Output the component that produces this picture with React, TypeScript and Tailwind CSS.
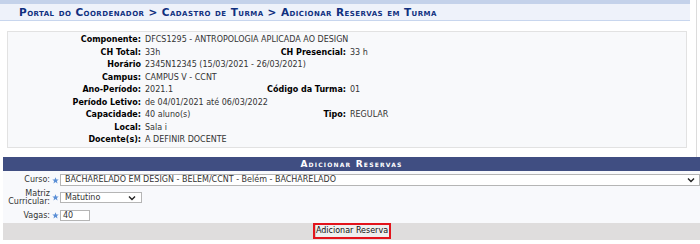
import React from "react";

const Star = () => (
  <svg width="7" height="7" viewBox="0 0 10 10" className="shrink-0">
    <polygon
      points="5,0.5 6.3,3.6 9.6,3.7 7,5.8 7.9,9.2 5,7.3 2.1,9.2 3,5.8 0.4,3.7 3.7,3.6"
      fill="#5b8fd6"
    />
  </svg>
);

const Chevron = () => (
  <svg width="8" height="6" viewBox="0 0 8 6" className="shrink-0">
    <path d="M1 1.5 L4 4.5 L7 1.5" stroke="#222" strokeWidth="1.4" fill="none" />
  </svg>
);

type Row = { l: string; v: string; l2?: string; v2?: string };

const rows: Row[] = [
  { l: "Componente:", v: "DFCS1295 - ANTROPOLOGIA APLICADA AO DESIGN" },
  { l: "CH Total:", v: "33h", l2: "CH Presencial:", v2: "33 h" },
  { l: "Horário", v: "2345N12345 (15/03/2021 - 26/03/2021)" },
  { l: "Campus:", v: "CAMPUS V - CCNT" },
  { l: "Ano-Período:", v: "2021.1", l2: "Código da Turma:", v2: "01" },
  { l: "Período Letivo:", v: "de 04/01/2021 até 06/03/2022" },
  { l: "Capacidade:", v: "40 aluno(s)", l2: "Tipo:", v2: "REGULAR" },
  { l: "Local:", v: "Sala i" },
  { l: "Docente(s):", v: "A DEFINIR DOCENTE" },
];

export default function App() {
  return (
    <div
      className="w-[700px] h-[244px] bg-white overflow-hidden text-[8px] leading-none text-[#333]"
      style={{ fontFamily: '"DejaVu Sans", Verdana, sans-serif' }}
    >
      <div className="w-[697px] border-r border-[#dcdcdc] pb-[9px]">
        <div className="w-[690px] h-[4px] bg-[#c4d2ea]" />
        <div className="w-[690px] h-[17px] bg-[#eef2fa] border-b border-[#c8d6ee] flex items-center pl-[19px]">
          <span
            className="font-bold text-[10.5px] text-[#10307f] tracking-[0.45px] whitespace-nowrap"
            style={{ fontVariant: "small-caps" }}
          >
            Portal do Coordenador &gt; Cadastro de Turma &gt; Adicionar Reservas em Turma
          </span>
        </div>
        <div className="ml-[7px] mt-[10px] w-[680px] h-[117px] border border-[#e2e2e2] bg-[#f8f9fb] pt-[2px]">
          {rows.map((r, i) => (
            <div key={i} className="flex items-center h-[12.5px]">
              <div className="w-[133px] text-right font-bold text-black whitespace-nowrap">{r.l}</div>
              <div className="ml-[4px] w-[105px] whitespace-nowrap">{r.v}</div>
              {r.l2 && (
                <>
                  <div className="w-[96px] text-right font-bold text-black whitespace-nowrap">{r.l2}</div>
                  <div className="ml-[4px] whitespace-nowrap">{r.v2}</div>
                </>
              )}
            </div>
          ))}
        </div>
      </div>

      <div className="ml-[3px] w-[697px]">
        <div className="h-[14px] bg-[#404e82] flex items-center justify-center">
          <span
            className="font-bold text-white text-[9px] tracking-[1.2px]"
            style={{ fontVariant: "small-caps" }}
          >
            Adicionar Reservas
          </span>
        </div>
        <div className="bg-[#f8f9fc] pt-[2px]">
          <div className="flex items-center h-[14px]">
            <div className="w-[47px] text-right">Curso:</div>
            <div className="w-[10px] flex justify-center"><Star /></div>
            <div className="w-[640px] h-[12px] bg-white border border-[#b5b5b5] flex items-center justify-between pl-[4px] pr-[4px]">
              <span>BACHARELADO EM DESIGN - BELEM/CCNT - Belém - BACHARELADO</span>
              <Chevron />
            </div>
          </div>
          <div className="flex items-center h-[21px]">
            <div className="w-[47px] text-right leading-[8px]">
              Matriz
              <br />
              Curricular:
            </div>
            <div className="w-[10px] flex justify-center"><Star /></div>
            <div className="w-[82px] h-[11px] bg-white border border-[#b5b5b5] flex items-center justify-between pl-[4px] pr-[5px]">
              <span>Matutino</span>
              <Chevron />
            </div>
          </div>
          <div className="flex items-center h-[15px]">
            <div className="w-[47px] text-right">Vagas:</div>
            <div className="w-[10px] flex justify-center"><Star /></div>
            <div className="w-[30px] h-[11px] bg-white border border-[#b5b5b5] flex items-center pl-[2px]">
              <span>40</span>
            </div>
          </div>
        </div>
        <div className="h-[17px] bg-[#dfdddd] flex justify-center">
          <div className="w-[78px] h-[16px] border-2 border-[#e3141c] flex">
            <div className="flex-1 bg-[#efefef] border-l border-[#c8c8c8] flex items-center justify-center text-[#111] whitespace-nowrap">
              Adicionar Reserva
            </div>
          </div>
        </div>
      </div>
    </div>
  );
}
